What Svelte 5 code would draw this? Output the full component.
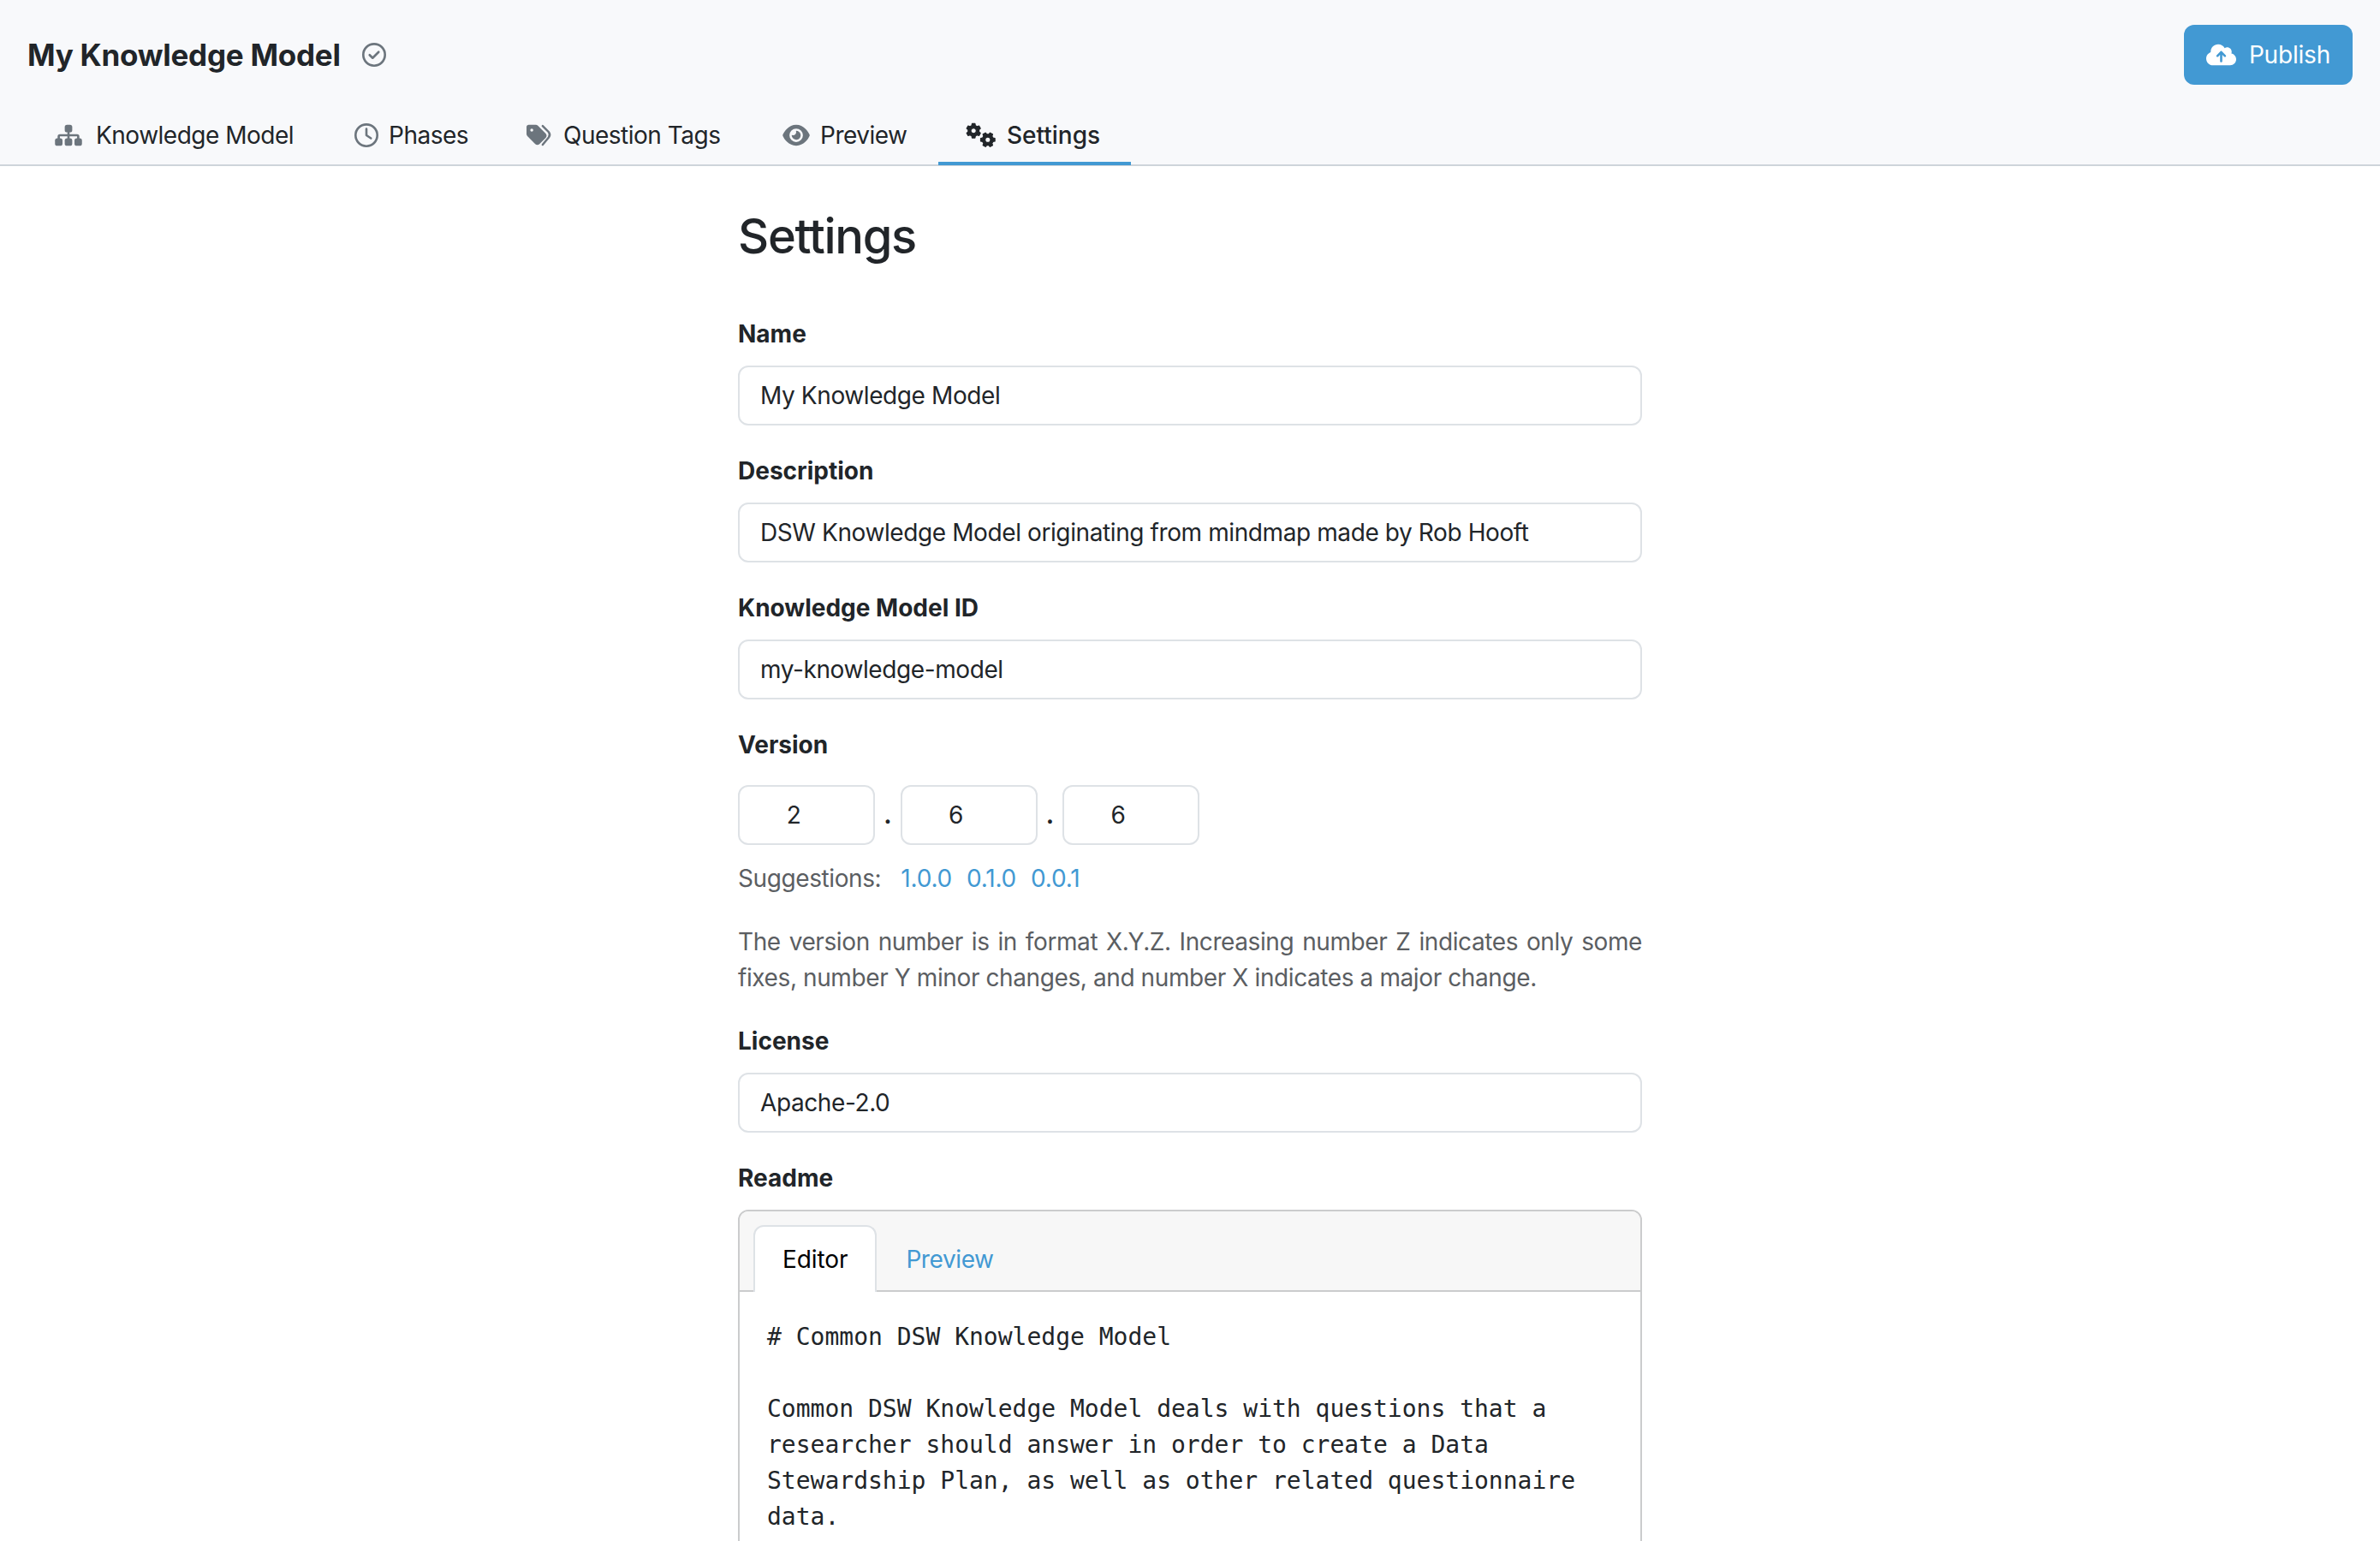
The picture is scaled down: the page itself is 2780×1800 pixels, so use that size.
<script lang="ts">
	// widths leave room for the heavier label of the active state
	const tabs = [
		{ icon: 'sitemap', label: 'Knowledge Model', width: 350, gap: 16 },
		{ icon: 'clock', label: 'Phases', width: 201, gap: 12 },
		{ icon: 'tags', label: 'Question Tags', width: 299, gap: 15 },
		{ icon: 'eye', label: 'Preview', width: 214, gap: 12 },
		{ icon: 'cogs', label: 'Settings', width: 225, gap: 13 }
	];

	let active = $state('Settings');
	let editorTab = $state('Editor');
	let version = $state(['2', '6', '6']);

	const suggestions = ['1.0.0', '0.1.0', '0.0.1'];

	const readme = `# Common DSW Knowledge Model

Common DSW Knowledge Model deals with questions that a researcher should answer in order to create a Data Stewardship Plan, as well as other related questionnaire data.`;

	// outline of a cog with rounded-off teeth
	const cog = (cx: number, cy: number, r: number, offset: number) => {
		const points: string[] = [];
		for (let i = 0; i < 6; i++) {
			const a = offset + (i * Math.PI) / 3;
			for (const [da, k] of [[-0.33, 0.76], [-0.2, 1], [0.2, 1], [0.33, 0.76]]) {
				points.push(`${(cx + Math.cos(a + da) * r * k).toFixed(1)} ${(cy + Math.sin(a + da) * r * k).toFixed(1)}`);
			}
		}
		const h = r * 0.38;
		return `M${points.join('L')}ZM${cx - h} ${cy}a${h} ${h} 0 1 0 ${2 * h} 0a${h} ${h} 0 1 0 ${-2 * h} 0Z`;
	};
</script>

{#snippet field(id: string, label: string, value: string)}
	<div class="form-group">
		<label for={id}>{label}</label>
		<input {id} type="text" {value} />
	</div>
{/snippet}

<header>
	<div class="top">
		<div class="title">
			<h1>My Knowledge Model</h1>
			<svg class="saved" viewBox="0 0 512 512">
				<circle cx="256" cy="256" r="232" fill="none" stroke="currentColor" stroke-width="48" />
				<path d="M160 260l64 64 128-128" fill="none" stroke="currentColor" stroke-width="48" stroke-linecap="round" stroke-linejoin="round" />
			</svg>
		</div>
		<button class="publish">
			<svg viewBox="0 0 640 512">
				<path fill="currentColor" fill-rule="evenodd" d="M144 480C64.500 480 0 415.500 0 336c0-62.800 40.200-116.200 96.200-135.900-.1-2.700-.2-5.400-.2-8.100 0-88.400 71.600-160 160-160 59.300 0 111 32.200 138.700 80.200C409.900 102 428.300 96 448 96c53 0 96 43 96 96 0 12.200-2.300 23.800-6.400 34.600C596 238.400 640 290.100 640 352c0 70.700-57.300 128-128 128H144zm79-217c-9.400 9.400-9.400 24.600 0 33.900s24.600 9.400 33.900 0l39-39V392c0 13.300 10.700 24 24 24s24-10.700 24-24V257.900l39 39c9.400 9.400 24.600 9.400 33.900 0s9.400-24.600 0-33.900l-80-80c-9.400-9.400-24.600-9.400-33.900 0l-80 80z" />
			</svg>
			Publish
		</button>
	</div>

	<nav>
		{#each tabs as tab}
			<button
				class="tab"
				class:active={active === tab.label}
				style="width: {tab.width}px; gap: {tab.gap}px"
				onclick={() => (active = tab.label)}
			>
				{#if tab.icon === 'sitemap'}
					<svg class="wide" viewBox="0 0 576 512" fill="currentColor">
						<rect x="208" y="32" width="160" height="160" rx="48" />
						<rect x="0" y="320" width="160" height="160" rx="48" />
						<rect x="208" y="320" width="160" height="160" rx="48" />
						<rect x="416" y="320" width="160" height="160" rx="48" />
						<path d="M288 180v150M80 330v-50q0-24 24-24h368q24 0 24 24v50" fill="none" stroke="currentColor" stroke-width="48" />
					</svg>
				{:else if tab.icon === 'clock'}
					<svg viewBox="0 0 512 512" fill="none" stroke="currentColor" stroke-width="48" stroke-linecap="round" stroke-linejoin="round">
						<circle cx="256" cy="256" r="232" />
						<path d="M256 120v136l96 64" />
					</svg>
				{:else if tab.icon === 'tags'}
					<svg viewBox="0 0 512 512" fill="currentColor">
						<path fill-rule="evenodd" d="M0 80v149.500c0 17 6.700 33.300 18.700 45.300l168 168c25 25 65.500 25 90.500 0l133.500-133.500c25-25 25-65.500 0-90.500l-168-168C230.700 38.700 214.500 32 197.500 32H48C21.500 32 0 53.500 0 80zm112 32a32 32 0 1 1 0 64 32 32 0 1 1 0-64z" />
						<path d="M345 56l129 131q44 58 0 114L345 456" fill="none" stroke="currentColor" stroke-width="46" stroke-linecap="round" />
					</svg>
				{:else if tab.icon === 'eye'}
					<svg class="wide" viewBox="0 0 576 512" fill="currentColor">
						<path fill-rule="evenodd" d="M288 32c-80.800 0-145.500 36.800-192.600 80.600C48.600 156 17.300 208 2.500 243.700c-3.300 7.900-3.300 16.700 0 24.600C17.300 304 48.600 356 95.400 399.400 142.500 443.200 207.200 480 288 480s145.500-36.800 192.600-80.600c46.800-43.500 78.100-95.400 93-131.100 3.300-7.900 3.300-16.700 0-24.600-14.900-35.700-46.200-87.700-93-131.100C433.500 68.800 368.800 32 288 32zM144 256a144 144 0 1 1 288 0 144 144 0 1 1-288 0zm144-64c0 35.300-28.700 64-64 64-7.100 0-13.900-1.200-20.300-3.300-5.500-1.800-11.900 1.600-11.700 7.400.3 6.900 1.300 13.800 3.200 20.700 13.700 51.200 66.400 81.600 117.600 67.900s81.600-66.400 67.900-117.600c-11.100-41.500-47.800-69.400-88.600-71.100-5.800-.2-9.200 6.100-7.400 11.700 2.100 6.400 3.300 13.200 3.300 20.300z" />
					</svg>
				{:else}
					<svg class="cogs" viewBox="0 0 640 512" fill="currentColor" fill-rule="evenodd" stroke="currentColor" stroke-width="24" stroke-linejoin="round">
						<path d={cog(168, 160, 154, Math.PI / 6)} />
						<path d={cog(472, 352, 154, 0)} />
					</svg>
				{/if}
				{tab.label}
			</button>
		{/each}
	</nav>
</header>

<main>
	<h2>Settings</h2>

	{@render field('name', 'Name', 'My Knowledge Model')}
	{@render field('description', 'Description', 'DSW Knowledge Model originating from mindmap made by Rob Hooft')}
	{@render field('km-id', 'Knowledge Model ID', 'my-knowledge-model')}

	<div class="form-group">
		<label for="version-0">Version</label>
		<div class="version">
			{#each version as _, i}
				{#if i > 0}<span class="dot">.</span>{/if}
				<input id="version-{i}" type="text" bind:value={version[i]} />
			{/each}
		</div>
		<p class="suggestions">
			<span>Suggestions:</span>
			{#each suggestions as s}
				<button class="link" onclick={() => (version = s.split('.'))}>{s}</button>
			{/each}
		</p>
		<p class="help">
			The version number is in format X.Y.Z. Increasing number Z indicates only some fixes, number Y minor changes, and
			number X indicates a major change.
		</p>
	</div>

	{@render field('license', 'License', 'Apache-2.0')}

	<div class="form-group">
		<label for="readme">Readme</label>
		<div class="card">
			<div class="card-header">
				{#each ['Editor', 'Preview'] as name}
					<button class="card-tab" class:active={editorTab === name} onclick={() => (editorTab = name)}>{name}</button>
				{/each}
			</div>
			<textarea id="readme" value={readme}></textarea>
		</div>
	</div>
</main>

<style>
	:global(body) {
		background: #fff;
		overflow: hidden;
	}

	:global(#app) {
		height: 1800px;
		overflow: hidden;
		font-family: Inter, sans-serif;
		font-size: 28px;
		line-height: 42px;
		letter-spacing: -0.4px;
		color: #212529;
	}

	button,
	input,
	textarea {
		box-sizing: border-box;
		margin: 0;
		font: inherit;
		letter-spacing: inherit;
		color: inherit;
		outline: none;
	}

	button {
		padding: 0;
		border: none;
		background: none;
		cursor: pointer;
	}

	svg {
		display: block;
		flex: none;
		overflow: visible;
	}

	header {
		box-sizing: border-box;
		height: 194px;
		background: #f8f9fb;
		border-bottom: 2px solid #ced4da;
	}

	.top {
		display: flex;
		align-items: center;
		justify-content: space-between;
		height: 128px;
		padding: 0 32px;
	}

	.title {
		display: flex;
		align-items: center;
		gap: 25px;
	}

	h1 {
		margin: 0;
		font-size: 35px;
		font-weight: 700;
		letter-spacing: -0.25px;
	}

	.saved {
		width: 28px;
		height: 28px;
		color: #6c757d;
	}

	.publish {
		display: flex;
		align-items: center;
		gap: 15px;
		height: 70px;
		padding: 0 26px;
		border-radius: 12px;
		background: #4299d3;
		color: #fff;
		letter-spacing: -0.2px;
	}

	.publish svg {
		width: 35px;
		height: 28px;
	}

	nav {
		display: flex;
		height: 65px;
		padding-left: 32px;
	}

	.tab {
		display: flex;
		align-items: center;
		height: 65px;
		padding: 0 0 2px 32px;
		border-bottom: 4px solid transparent;
		letter-spacing: -0.5px;
		white-space: nowrap;
	}

	.tab.active {
		font-weight: 500;
		letter-spacing: 0;
		border-bottom-color: #4299d3;
	}

	.tab svg {
		width: 28px;
		height: 28px;
		color: #6c757d;
	}

	.tab svg.wide {
		width: 32px;
	}

	.tab svg.cogs {
		width: 35px;
		color: #212529;
	}

	main {
		width: 1056px;
		margin: 0 auto;
		padding-top: 48px;
	}

	h2 {
		margin: 0 0 59px;
		font-size: 56px;
		font-weight: 500;
		line-height: 68px;
		letter-spacing: -1.3px;
	}

	.form-group {
		margin-bottom: 32px;
	}

	label {
		display: block;
		margin-bottom: 16px;
		font-weight: 700;
		letter-spacing: 0;
	}

	input {
		display: block;
		width: 100%;
		height: 70px;
		padding: 0 24px;
		border: 2px solid #dee2e6;
		border-radius: 12px;
		background: #fff;
	}

	.version {
		display: flex;
		align-items: center;
		padding-top: 10px;
	}

	.version input {
		width: 160px;
		padding: 0 54px 0 24px;
		text-align: center;
	}

	.dot {
		width: 29.5px;
		text-align: center;
		font-weight: 700;
	}

	.suggestions {
		display: flex;
		gap: 17px;
		margin: 18px 0 32px;
		color: #5b5e62;
	}

	.suggestions span {
		margin-right: 6px;
	}

	.link {
		color: #4299d3;
		letter-spacing: -0.2px;
	}

	.help {
		margin: 0;
		color: #5b5e62;
		text-align: justify;
	}

	.card {
		box-sizing: border-box;
		height: 600px;
		border: 2px solid #cbcccd;
		border-radius: 12px;
		overflow: hidden;
	}

	.card-header {
		display: flex;
		box-sizing: border-box;
		height: 94px;
		padding: 16px 16px 0;
		background: #f7f7f7;
		border-bottom: 2px solid #cbcccd;
	}

	.card-tab {
		height: 78px;
		padding: 0 32px;
		border: 2px solid transparent;
		border-bottom: none;
		border-radius: 12px 12px 0 0;
		color: #4299d3;
	}

	.card-tab.active {
		background: #fff;
		border-color: #dee2e6;
		color: #000;
		letter-spacing: -0.1px;
	}

	textarea {
		display: block;
		width: 100%;
		height: 500px;
		padding: 32px;
		border: none;
		resize: none;
		overflow: hidden;
		font-family: 'DejaVu Sans Mono', monospace;
		letter-spacing: 0;
	}
</style>
